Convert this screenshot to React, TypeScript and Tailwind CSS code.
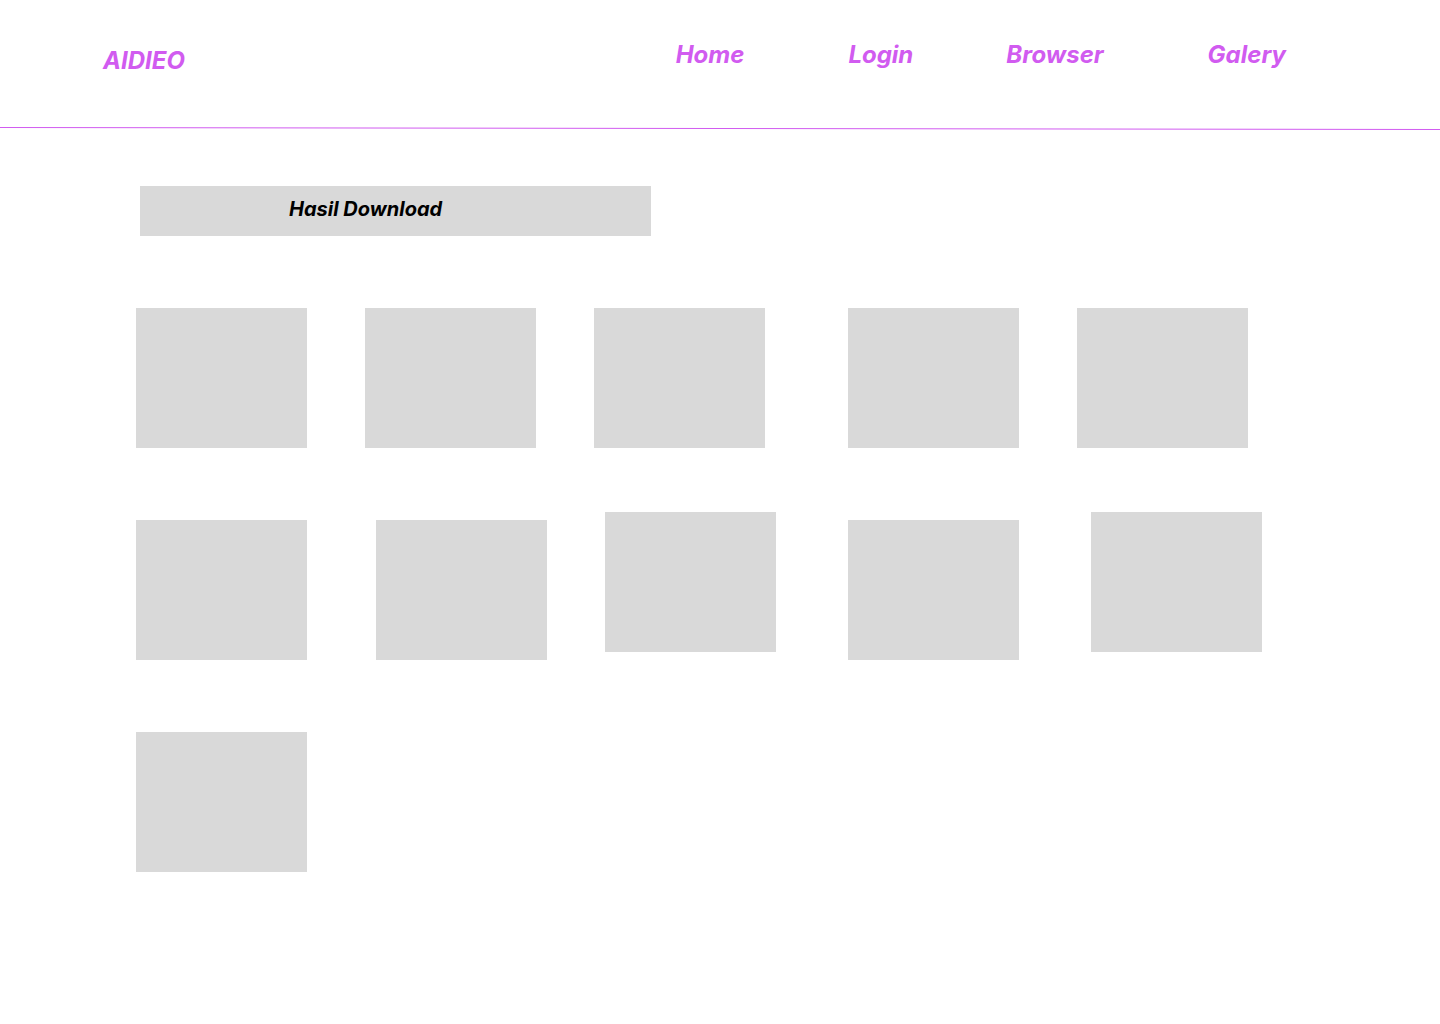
const links = [
  { label: "Home", gap: "" },
  { label: "Login", gap: "ml-[104px]" },
  { label: "Browser", gap: "ml-[93px]" },
  { label: "Galery", gap: "ml-[104px]" },
];

const rows = [
  ["", "ml-[58px]", "ml-[58px]", "ml-[83px]", "ml-[58px]"],
  ["mt-2", "ml-[69px] mt-2", "ml-[58px]", "ml-[72px] mt-2", "ml-[72px]"],
  [""],
];

const rowGaps = ["mt-[72px]", "mt-16", "mt-[72px]"];

export default function App() {
  return (
    <div className="min-h-screen bg-white pb-12 font-['Inter',sans-serif] font-bold italic">
      <header>
        <div className="flex items-start justify-between pt-10 pr-[154px] pb-[51px] pl-[103px] text-2xl leading-[30px] text-[#d15bf0]">
          <a href="#" className="pt-1.5">
            AIDIEO
          </a>
          <nav className="flex">
            {links.map((link) => (
              <a key={link.label} href="#" className={link.gap}>
                {link.label}
              </a>
            ))}
          </nav>
        </div>
        <svg className="block h-[3px] w-full" viewBox="0 0 1440 3" preserveAspectRatio="none" aria-hidden="true">
          <line x1="0" y1="0.5" x2="1440" y2="2.5" stroke="#d15bf0" strokeWidth="1" />
        </svg>
      </header>
      <main className="px-[136px] pt-14">
        <h1 className="ml-1 h-[50px] w-full max-w-[511px] bg-[#d9d9d9] pt-2.5 pl-[149px] text-xl leading-[26px] text-black">
          Hasil Download
        </h1>
        {rows.map((row, i) => (
          <section key={i} className={`flex items-start ${rowGaps[i]}`}>
            {row.map((offset, j) => (
              <div key={j} className={`h-[140px] w-[171px] shrink-0 bg-[#d9d9d9] ${offset}`} />
            ))}
          </section>
        ))}
      </main>
    </div>
  );
}
